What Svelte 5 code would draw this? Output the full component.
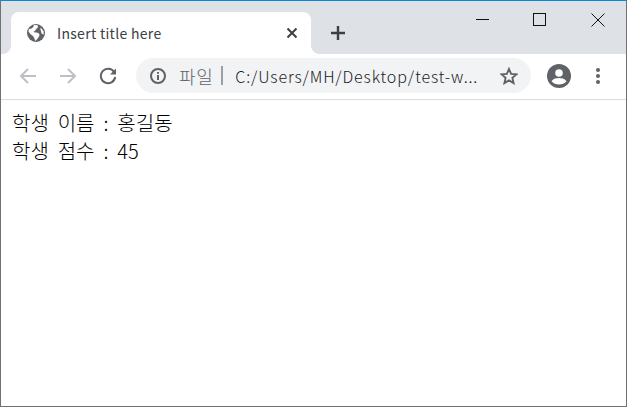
<script>
  const lines = ['학생 이름 : 홍길동', '학생 점수 : 45'];
</script>

<div class="window">
  <header class="strip">
    <div class="tab">
      <svg class="globe" width="18" height="18" viewBox="0 0 18 18"><circle cx="9" cy="9" r="9" fill="#5f6368"/><path d="M2 5 C4.5 5 6.5 3.5 7 1 L10.5 1.2 C11.5 3 10.5 4.5 9 5 C8.5 6.5 8 7.5 6.5 7.5 C7.5 9 9 8 11 9 C12.5 9.5 13 11 12 12.5 C11 14 10 15.5 8.5 17 C7.5 15 7 13 6 12 C4 11 2.5 9 1.5 7.5 Z M13.5 3.5 L16.5 7 L16.8 10.5 L14.5 9.5 C14.5 7.5 13 6 13.5 3.5 Z" fill="#fff"/></svg>
      <span class="title">Insert title here</span>
      <svg class="close" width="12" height="12" viewBox="0 0 12 12"><path d="M1.5 1.5 L10.5 10.5 M10.5 1.5 L1.5 10.5" stroke="#3c4043" stroke-width="2"/></svg>
    </div>
    <svg class="plus" width="16" height="16" viewBox="0 0 16 16"><path d="M8 1 V15 M1 8 H15" stroke="#3c4043" stroke-width="2.4"/></svg>
    <div class="controls">
      <svg width="14" height="14" viewBox="0 0 14 14"><path d="M0 6.5 H13" stroke="#111" stroke-width="1"/></svg>
      <svg class="max" width="14" height="14" viewBox="0 0 14 14"><rect x="0.5" y="0.5" width="12" height="12" fill="none" stroke="#111" stroke-width="1"/></svg>
      <svg width="14" height="14" viewBox="0 0 14 14"><path d="M0.5 0.5 L13.5 13.5 M13.5 0.5 L0.5 13.5" stroke="#111" stroke-width="1"/></svg>
    </div>
  </header>

  <nav class="toolbar">
    <svg class="nav" width="18" height="18" viewBox="0 0 18 18"><path d="M17 9 H2 M9 2 L2 9 L9 16" fill="none" stroke="#bdc1c6" stroke-width="2"/></svg>
    <svg class="nav" width="18" height="18" viewBox="0 0 18 18"><path d="M1 9 H16 M9 2 L16 9 L9 16" fill="none" stroke="#bdc1c6" stroke-width="2"/></svg>
    <svg class="nav" width="18" height="18" viewBox="0 0 18 18"><path d="M15.2 5.2 A7.2 7.2 0 1 0 16.2 10" fill="none" stroke="#5f6368" stroke-width="2"/><path d="M17 1.5 V7.5 H11 Z" fill="#5f6368"/></svg>
    <div class="omni">
      <svg width="18" height="18" viewBox="0 0 18 18"><circle cx="9" cy="9" r="7" fill="none" stroke="#5f6368" stroke-width="2"/><path d="M9 8 V13 M9 5 V6.8" stroke="#5f6368" stroke-width="2"/></svg>
      <span class="scheme">파일</span>
      <span class="sep"></span>
      <span class="url">C:/Users/MH/Desktop/test-w...</span>
      <svg class="star" width="18" height="18" viewBox="0 0 18 18"><path d="M9 2 L11.1 6.9 L16.4 7.4 L12.4 10.9 L13.6 16.1 L9 13.4 L4.4 16.1 L5.6 10.9 L1.6 7.4 L6.9 6.9 Z" fill="none" stroke="#5f6368" stroke-width="1.9"/></svg>
    </div>
    <svg class="avatar" width="24" height="24" viewBox="0 0 24 24"><circle cx="12" cy="12" r="12" fill="#5f6368"/><circle cx="12" cy="9" r="3.8" fill="#fff"/><path d="M4.5 17.2 C6.5 14.6 9.5 14 12 14 C14.5 14 17.5 14.6 19.5 17.2 C17.5 19.4 15 20.5 12 20.5 C9 20.5 6.5 19.4 4.5 17.2 Z" fill="#fff"/></svg>
    <svg class="menu" width="6" height="18" viewBox="0 0 6 18"><circle cx="3" cy="3" r="2" fill="#5f6368"/><circle cx="3" cy="9" r="2" fill="#5f6368"/><circle cx="3" cy="15" r="2" fill="#5f6368"/></svg>
  </nav>

  <main class="page">
    {#each lines as line}
      <div>{line}</div>
    {/each}
  </main>
</div>

<style>
  :global(body) { margin: 0; background: #fff; }
  .window {
    box-sizing: border-box;
    height: 100vh;
    display: flex;
    flex-direction: column;
    border: 1px solid #6f7275;
    border-top: 1px solid #0f87d9;
    overflow: hidden;
    font-family: "Noto Sans CJK KR", "Open Sans", sans-serif;
  }
  .strip {
    display: flex;
    align-items: flex-start;
    height: 53px;
    flex: none;
    background: #dee1e6;
    padding: 11px 0 0 10px;
    box-sizing: border-box;
  }
  .tab {
    position: relative;
    box-sizing: border-box;
    width: 300px;
    height: 42px;
    background: #fff;
    border-radius: 8px 8px 0 0;
    display: flex;
    align-items: center;
    padding: 0 13px 0 16px;
  }
  .tab::before, .tab::after {
    content: "";
    position: absolute;
    bottom: 0;
    width: 8px;
    height: 8px;
  }
  .tab::before {
    left: -8px;
    background: radial-gradient(circle at 0 0, #dee1e6 7.5px, #fff 8px);
  }
  .tab::after {
    right: -8px;
    background: radial-gradient(circle at 100% 0, #dee1e6 7.5px, #fff 8px);
  }
  .title {
    margin-left: 12px;
    font-size: 14px;
    letter-spacing: 0.3px;
    color: #3c4043;
    font-family: "Noto Sans CJK KR", "Noto Sans", sans-serif;
    flex: 1;
  }
  .globe { flex: none; }
  .plus { margin: 13px 0 0 19px; flex: none; }
  .controls {
    margin: -1px 0 0 auto;
    display: flex;
    gap: 44px;
    padding: 2px 21px 0 0;
  }
  .max { margin-left: -1px; }
  .toolbar {
    flex: none;
    box-sizing: border-box;
    height: 46px;
    display: flex;
    align-items: center;
    background: #fff;
    border-bottom: 1px solid #dadce0;
    padding: 0 0 2px 18px;
  }
  .nav { margin-right: 22px; flex: none; }
  .nav:nth-of-type(3) { margin-right: 19px; }
  .omni {
    box-sizing: border-box;
    width: 395px;
    height: 35px;
    border-radius: 18px;
    background: #f1f3f4;
    display: flex;
    align-items: center;
    padding: 0 13px 0 13px;
    flex: none;
  }
  .scheme {
    margin-left: 12px;
    font-size: 18px;
    letter-spacing: 0.6px;
    font-weight: 300;
    color: #5f6368;
  }
  .sep {
    width: 2px;
    height: 19px;
    background: #9aa0a6;
    margin: 0 12px 0 8px;
  }
  .url {
    font-size: 16px;
    letter-spacing: 0.85px;
    font-weight: 300;
    color: #202124;
    flex: 1;
    white-space: nowrap;
  }
  .star { flex: none; }
  .avatar { margin-left: 16px; flex: none; }
  .menu { margin-left: 24px; flex: none; }
  .page {
    flex: 1;
    background: #fff;
    color: #000;
    padding: 9px 11px;
    font-size: 20px;
    font-weight: 300;
    word-spacing: 4.5px;
    line-height: 28px;
  }
</style>
